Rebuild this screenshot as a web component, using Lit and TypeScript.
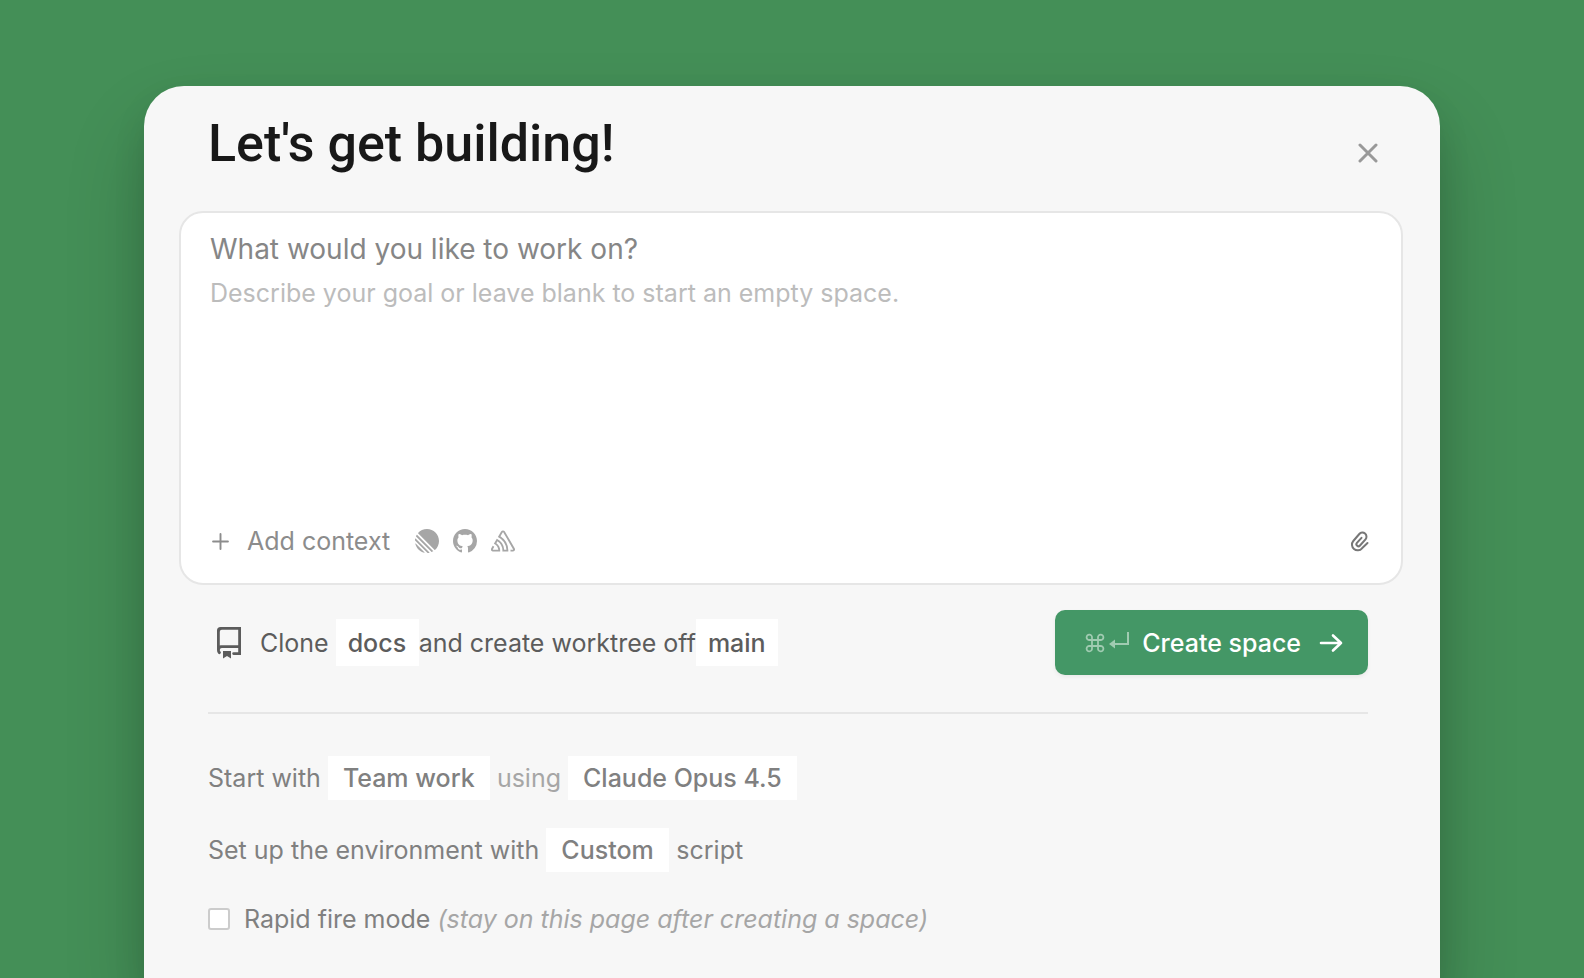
import { LitElement, html, css, svg } from "lit";
import { customElement } from "lit/decorators.js";

const plusIcon = svg`<path d="M8 1v14M1 8h14" fill="none" stroke="currentColor" stroke-width="1.8" stroke-linecap="round"/>`;
const linearMark = svg`<path fill="currentColor" d="M1.225 61.523c-.222-.949.908-1.546 1.597-.857l36.512 36.512c.69.69.092 1.82-.857 1.597C20.052 94.452 5.548 79.948 1.225 61.523ZM.002 46.889a.99.99 0 0 0 .29.76L52.35 99.71c.201.2.478.307.76.29 2.37-.149 4.695-.46 6.963-.927.764-.157 1.03-1.096.478-1.648L2.576 39.448c-.552-.551-1.491-.286-1.648.479a50.067 50.067 0 0 0-.926 6.962ZM4.21 29.705a.988.988 0 0 0 .208 1.1l64.776 64.776c.289.29.726.375 1.1.208a49.908 49.908 0 0 0 5.185-2.684.981.981 0 0 0 .183-1.54L8.436 24.336a.981.981 0 0 0-1.541.183 49.896 49.896 0 0 0-2.684 5.185ZM12.659 18.074a.98.98 0 0 1-.037-1.354C21.781 6.46 35.11 0 49.952 0 77.592 0 100 22.407 100 50.048c0 14.842-6.46 28.17-16.72 37.33a.98.98 0 0 1-1.354-.038L12.659 18.074Z"/>`;
const githubMark = svg`<path fill="currentColor" d="M8 0C3.58 0 0 3.58 0 8c0 3.54 2.29 6.53 5.47 7.59.4.07.55-.17.55-.38 0-.19-.01-.82-.01-1.49-2.01.37-2.53-.49-2.69-.94-.09-.23-.48-.94-.82-1.13-.28-.15-.68-.52-.01-.53.63-.01 1.08.58 1.23.82.72 1.21 1.87.87 2.33.66.07-.52.28-.87.51-1.07-1.78-.2-3.64-.89-3.64-3.95 0-.87.31-1.59.82-2.15-.08-.2-.36-1.02.08-2.12 0 0 .67-.21 2.2.82.64-.18 1.32-.27 2-.27s1.36.09 2 .27c1.53-1.04 2.2-.82 2.2-.82.44 1.1.16 1.92.08 2.12.51.56.82 1.27.82 2.15 0 3.07-1.87 3.75-3.65 3.95.29.25.54.73.54 1.48 0 1.07-.01 1.93-.01 2.2 0 .21.15.46.55.38A8.01 8.01 0 0 0 16 8c0-4.42-3.58-8-8-8Z"/>`;
const sentryMark = svg`<path fill="currentColor" d="M13.91 2.505c-.873-1.448-2.972-1.448-3.844 0L6.904 7.92a15.478 15.478 0 0 1 8.53 12.811h-2.221A13.301 13.301 0 0 0 5.784 9.814l-2.926 5.06a7.65 7.65 0 0 1 4.435 5.848H2.194a.365.365 0 0 1-.298-.534l1.413-2.402a5.16 5.16 0 0 0-1.614-.913L.296 19.275a2.182 2.182 0 0 0 .812 2.999 2.24 2.24 0 0 0 1.086.288h6.983a9.322 9.322 0 0 0-3.845-8.318l1.11-1.922a11.47 11.47 0 0 1 4.95 10.24h5.915a17.242 17.242 0 0 0-7.885-15.28l2.244-3.845a.37.37 0 0 1 .504-.13c.255.14 9.75 16.708 9.928 16.9a.365.365 0 0 1-.327.543h-2.287c.029.612.029 1.223 0 1.831h2.297a2.206 2.206 0 0 0 1.922-3.31z"/>`;
const clipIcon = svg`<path d="M20.500 14L15 19.300A5.500 5.500 0 0 1 6.300 12L12.300 5A4 4 0 0 1 18.500 10.300L13 16.500A2 2 0 0 1 9.900 13.900L14.500 8.800" fill="none" stroke="currentColor" stroke-width="2" stroke-linecap="round" stroke-linejoin="round"/>`;
const repoIcon = svg`<path fill="currentColor" d="M2 1.800A1.800 1.800 0 0 1 3.800 0H14v14h-3.700a.7.7 0 0 1 0-1.400h2.300v-2.100H4.400a1 1 0 0 0-1 1c0 .35.1.55.3.75a.7.7 0 0 1-1 1.100A2.500 2.500 0 0 1 2 11.500Zm10.600-.4H4.400a1 1 0 0 0-1 1v6.900c.3-.15.6-.2 1-.2h8.200ZM5 12h4v3.700l-2-1.250-2 1.250Z"/>`;
const commandIcon = svg`<path d="M7 7H4.500A2.700 2.700 0 1 1 7 4.500V15.500A2.700 2.700 0 1 1 4.500 13H15.500A2.700 2.700 0 1 1 13 15.500V4.500A2.700 2.700 0 1 1 15.500 7Z" fill="none" stroke="currentColor" stroke-width="1.800" stroke-linejoin="round"/>`;
const returnIcon = svg`<path d="M20 0v12H6" fill="none" stroke="currentColor" stroke-width="2"/><path d="M1 12l6-4.500v9z" fill="currentColor"/>`;
const arrowIcon = svg`<path d="M2 12h20M14 4.500l8 7.500-8 7.500" fill="none" stroke="currentColor" stroke-width="2.600" stroke-linecap="round" stroke-linejoin="round"/>`;
const closeIcon = svg`<path d="M2 2l16 16M18 2L2 18" fill="none" stroke="currentColor" stroke-width="3" stroke-linecap="round"/>`;

@customElement("app-root")
export class AppRoot extends LitElement {
  static styles = css`
    :host {
      display: flex;
      flex-direction: column;
      box-sizing: border-box;
      height: 100vh;
      padding: 86px 144px 0;
      overflow: hidden;
      background: #448f57;
      font-family: Inter, "Liberation Sans", sans-serif;
      font-size: 25px;
      line-height: 32px;
      color: #808080;
    }
    *, *::before, *::after { box-sizing: border-box; }
    button, input, textarea, select {
      font: inherit;
      color: inherit;
      margin: 0;
      padding: 0;
      border: 0;
      background: none;
      border-radius: 0;
      appearance: none;
      outline: none;
    }
    button, select { cursor: pointer; }
    svg { display: block; flex: none; }
    .card {
      flex: 1;
      padding: 24px 37px 0 35px;
      border-radius: 40px 40px 0 0;
      background: #f7f7f7;
      box-shadow: 0 44px 80px rgba(0, 0, 0, 0.2), 0 16px 32px rgba(0, 0, 0, 0.1);
    }
    .head {
      display: flex;
      align-items: center;
      justify-content: space-between;
      padding: 0 25px 0 29px;
      height: 85px;
      margin-bottom: 16px;
    }
    h1 {
      margin: 0 0 18px;
      font-family: Roboto, "Liberation Sans", sans-serif;
      font-size: 52px;
      line-height: 64px;
      font-weight: 500;
      color: #181818;
    }
    .close { color: #999; }
    .composer {
      display: flex;
      flex-direction: column;
      height: 374px;
      padding: 19px 30px 26px 29px;
      border: 2px solid #e6e6e6;
      border-radius: 24px;
      background: #fff;
    }
    .goal { font-size: 28px; line-height: 34px; height: 34px; }
    .details { flex: 1; min-height: 0; margin-top: 11px; resize: none; }
    .goal::placeholder { color: #868686; opacity: 1; }
    .details::placeholder { color: #bcbcbc; opacity: 1; }
    .tools { display: flex; align-items: center; color: #8c8c8c; }
    .add { display: flex; align-items: center; gap: 18px; margin-right: 25px; padding-left: 2px; }
    .sources { display: flex; gap: 14px; color: #a6a6a6; }
    .attach { margin-left: auto; color: #777; }
    .body { padding: 0 35px 0 29px; }
    .launch {
      display: flex;
      align-items: center;
      justify-content: space-between;
      padding: 25px 0 37px;
      border-bottom: 2px solid #e6e6e6;
      color: #5c5c5c;
    }
    .plan { display: flex; align-items: center; }
    .plan svg { margin: 0 15px 0 5px; }
    .chip {
      height: 44px;
      padding: 0 15px;
      background: #fff;
      font-weight: 500;
    }
    .plan .chip { height: 47px; padding: 0 12px; }
    .lead { margin-right: 7px; }
    .create {
      display: flex;
      align-items: center;
      height: 65px;
      padding: 0 25px 0 30px;
      border-radius: 10px;
      background: #449766;
      color: #fff;
      font-weight: 500;
      box-shadow: 0 2px 4px rgba(0, 0, 0, 0.06);
    }
    .keys { display: flex; align-items: center; gap: 3px; margin-right: 12px; color: #a0cbb1; }
    .create .arrow { margin-left: 18px; }
    .options { padding-top: 14px; }
    .row { display: flex; align-items: center; gap: 7px; height: 44px; margin-top: 28px; }
    .soft { color: #a6a6a6; }
    .check {
      width: 22px;
      height: 22px;
      margin-right: 7px;
      border: 2px solid #ccc;
      border-radius: 3px;
      background: #fff;
    }
    .check:checked { background: #449766; }
    .rapid { margin-top: 25px; }
  `;

  private icon(shape: unknown, size: number, box: string, name = "") {
    return html`<svg class=${name} width=${size} height=${size} viewBox=${box} aria-hidden="true">${shape}</svg>`;
  }

  private chip(label: string, value: string) {
    return html`<select class="chip" aria-label=${label}><option>${value}</option></select>`;
  }

  render() {
    return html`
      <main class="card">
        <header class="head">
          <h1>Let's get building!</h1>
          <button class="close" aria-label="Close">${this.icon(closeIcon, 20, "0 0 20 20")}</button>
        </header>
        <section class="composer">
          <input class="goal" aria-label="Goal" placeholder="What would you like to work on?" />
          <textarea class="details" aria-label="Details" placeholder="Describe your goal or leave blank to start an empty space."></textarea>
          <div class="tools">
            <button class="add">${this.icon(plusIcon, 17, "0 0 16 16")}Add context</button>
            <div class="sources">
              ${this.icon(linearMark, 24, "0 0 100 100")}
              ${this.icon(githubMark, 24, "0 0 16 16")}
              ${this.icon(sentryMark, 24, "0 0 24 24")}
            </div>
            <button class="attach" aria-label="Attach file">${this.icon(clipIcon, 24, "0 0 24 24")}</button>
          </div>
        </section>
        <div class="body">
          <div class="launch">
            <div class="plan">
              ${this.icon(repoIcon, 32, "0 0 16 16")}
              <span class="lead">Clone</span>${this.chip("Repository", "docs")}<span>and create worktree off</span>${this.chip("Branch", "main")}
            </div>
            <button class="create">
              <span class="keys">${this.icon(commandIcon, 20, "0 0 20 20")}${this.icon(returnIcon, 22, "0 0 22 22")}</span>
              Create space
              ${this.icon(arrowIcon, 24, "0 0 24 24", "arrow")}
            </button>
          </div>
          <div class="options">
            <div class="row">
              <span>Start with</span>${this.chip("Workflow", "Team work")}<span class="soft">using</span>${this.chip("Model", "Claude Opus 4.5")}
            </div>
            <div class="row">
              <span>Set up the environment with</span>${this.chip("Setup script", "Custom")}<span>script</span>
            </div>
            <label class="row rapid">
              <input class="check" type="checkbox" />
              <span>Rapid fire mode</span>
              <em class="soft">(stay on this page after creating a space)</em>
            </label>
          </div>
        </div>
      </main>
    `;
  }
}
